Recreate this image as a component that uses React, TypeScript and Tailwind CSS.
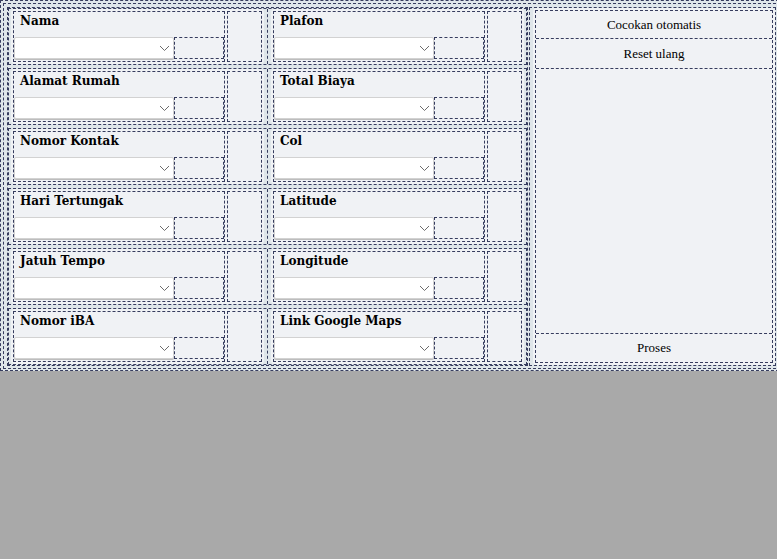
import React from "react";

const LEFT = ["Nama", "Alamat Rumah", "Nomor Kontak", "Hari Tertungak", "Jatuh Tempo", "Nomor iBA"];
const RIGHT = ["Plafon", "Total Biaya", "Col", "Latitude", "Longitude", "Link Google Maps"];

const dash = "border border-dashed border-[#363c5e]";

function Chevron() {
  return (
    <svg width="11" height="7" viewBox="0 0 11 7" fill="none" className="text-[#6b6b6b]">
      <path d="M1 1l4.5 4.5L10 1" stroke="currentColor" strokeWidth="1" />
    </svg>
  );
}

function Field({ label }: { label: string }) {
  return (
    <div className="flex h-[55px] w-[253px] gap-[2px] rounded-[4px] bg-[#f0f2f5] p-[2px]">
      <div className={`${dash} flex w-[212px] flex-col`}>
        <div className="h-[25px] pl-[6px] pt-[2px] font-['DejaVu_Serif',serif] text-[12px] font-bold leading-[14px] text-black">
          {label}
        </div>
        <div className="flex">
          <div className="flex h-[22px] w-[160px] items-center justify-end rounded-[2px] border border-[#d2d2d2] bg-white pr-[3px] shadow-[0_1px_0_#bdbdbd]">
            <Chevron />
          </div>
          <div className={`${dash} h-[22px] flex-1`} />
        </div>
      </div>
      <div className={`${dash} flex-1`} />
    </div>
  );
}

export default function App() {
  return (
    <div className="h-[559px] w-full overflow-hidden bg-[#a9a9a9] font-['Liberation_Serif',serif]">
      <div className={`${dash} w-[784px] bg-[#dfe6ea] p-[2px] pb-[1px]`}>
        <div className={`${dash} flex gap-[1px] p-[3px] pb-[2px]`}>
          <div className={`${dash} flex w-[521px] flex-col gap-[3px]`}>
            {LEFT.map((l, i) => (
              <div key={l} className={`${dash} flex gap-[3px] pl-[2px]`}>
                <Field label={l} />
                <div className="border-l border-dashed border-[#363c5e]" />
                <Field label={RIGHT[i]} />
              </div>
            ))}
          </div>
          <div className={`${dash} w-[247px] pl-[3px]`}>
            <div className="h-full rounded-[4px] bg-[#f0f2f5] p-[2px]">
              <div className={`${dash} flex h-full flex-col text-[13px] text-black`}>
                <div className="flex h-[28px] items-center justify-center border-b border-dashed border-[#363c5e]">
                  Cocokan otomatis
                </div>
                <div className="flex h-[30px] items-center justify-center border-b border-dashed border-[#363c5e]">
                  Reset ulang
                </div>
                <div className="flex-1" />
                <div className="flex h-[29px] items-center justify-center border-t border-dashed border-[#363c5e]">
                  Proses
                </div>
              </div>
            </div>
          </div>
        </div>
      </div>
    </div>
  );
}
